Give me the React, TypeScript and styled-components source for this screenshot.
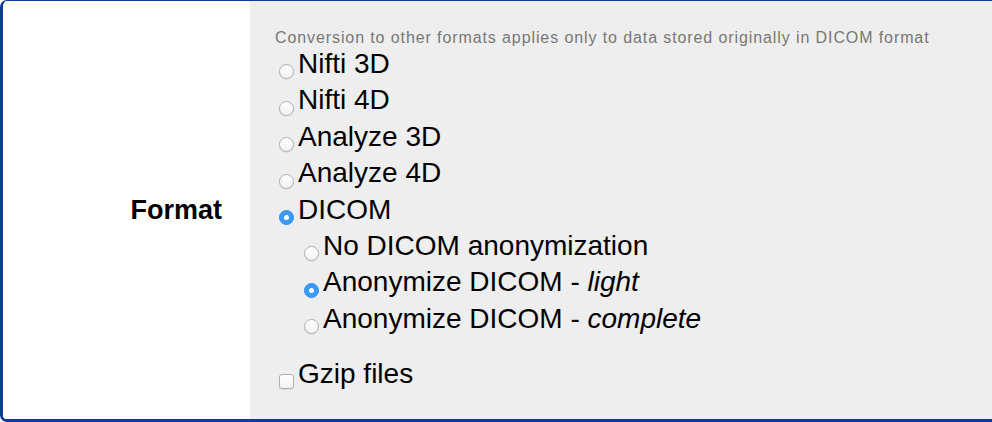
import styled, { createGlobalStyle } from "styled-components";

const GlobalStyle = createGlobalStyle`
  html, body {
    margin: 0;
    padding: 0;
    background: #ffffff;
  }
  body {
    font-family: "Liberation Sans", Arial, Helvetica, sans-serif;
  }
`;

const Panel = styled.div`
  box-sizing: border-box;
  width: 992px;
  height: 422px;
  display: grid;
  grid-template-columns: 247px 1fr;
  border-style: solid;
  border-color: #0d3b96;
  border-width: 1px 0 3px 3px;
  border-radius: 7px 0 0 7px;
  overflow: hidden;
`;

const LabelCell = styled.div`
  background: #ffffff;
  display: flex;
  align-items: center;
  justify-content: flex-end;
  padding-right: 28px;
  font-size: 27px;
  font-weight: bold;
  color: #000;
`;

const FieldCell = styled.div`
  background: #eeeeee;
  padding: 29px 0 0 25px;
`;

const Hint = styled.div`
  font-size: 16px;
  line-height: 16px;
  letter-spacing: 0.9px;
  color: #777777;
  white-space: nowrap;
`;

const Row = styled.label<{ $indent?: boolean }>`
  display: flex;
  align-items: flex-end;
  height: 36.4px;
  padding-left: ${(p) => (p.$indent ? "25px" : "0")};
  font-size: 28px;
  line-height: 36.4px;
  color: #000;
  white-space: nowrap;

  em {
    font-style: italic;
  }
`;

const Radio = styled.span<{ $checked?: boolean }>`
  box-sizing: border-box;
  flex: none;
  width: 15px;
  height: 15px;
  margin: 0 4px 3px 4px;
  border-radius: 50%;
  background: ${(p) =>
    p.$checked ? "#3b99fc" : "linear-gradient(#ffffff, #f2f2f2)"};
  border: 1px solid ${(p) => (p.$checked ? "#338ff0" : "#b0b0b0")};
  box-shadow: ${(p) => (p.$checked ? "none" : "0 0.5px 0.5px rgba(0,0,0,0.15)")};
  position: relative;

  &::after {
    content: "";
    display: ${(p) => (p.$checked ? "block" : "none")};
    position: absolute;
    left: 50%;
    top: 50%;
    width: 5px;
    height: 5px;
    margin: -2.5px 0 0 -2.5px;
    border-radius: 50%;
    background: #ffffff;
  }
`;

const Checkbox = styled.span`
  box-sizing: border-box;
  flex: none;
  width: 15px;
  height: 15px;
  margin: 0 4px 3px 4px;
  border-radius: 3px;
  background: linear-gradient(#ffffff, #f2f2f2);
  border: 1px solid #b0b0b0;
  box-shadow: 0 0.5px 0.5px rgba(0, 0, 0, 0.15);
`;

const GzipRow = styled(Row)`
  margin-top: 18.6px;
`;

const formats = ["Nifti 3D", "Nifti 4D", "Analyze 3D", "Analyze 4D"];

export default function App() {
  return (
    <>
      <GlobalStyle />
      <Panel>
        <LabelCell>Format</LabelCell>
        <FieldCell>
          <Hint>
            Conversion to other formats applies only to data stored originally in
            DICOM format
          </Hint>
          {formats.map((f) => (
            <Row key={f}>
              <Radio />
              {f}
            </Row>
          ))}
          <Row>
            <Radio $checked />
            DICOM
          </Row>
          <Row $indent>
            <Radio />
            No DICOM anonymization
          </Row>
          <Row $indent>
            <Radio $checked />
            Anonymize DICOM -&nbsp;<em>light</em>
          </Row>
          <Row $indent>
            <Radio />
            Anonymize DICOM -&nbsp;<em>complete</em>
          </Row>
          <GzipRow>
            <Checkbox />
            Gzip files
          </GzipRow>
        </FieldCell>
      </Panel>
    </>
  );
}
